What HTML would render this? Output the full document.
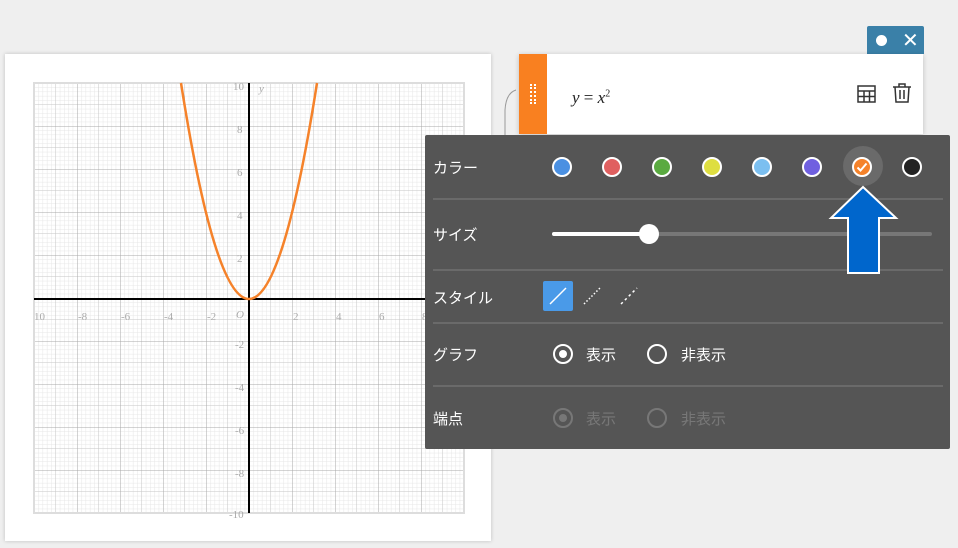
<!DOCTYPE html>
<html><head><meta charset="utf-8"><style>
body{margin:0;width:958px;height:548px;background:#efefef;position:relative;overflow:hidden;font-family:"Liberation Sans","Noto Sans CJK JP",sans-serif}
.card{position:absolute;left:5px;top:54px;width:486px;height:487px;background:#fff;box-shadow:0 0 4px rgba(0,0,0,.2)}
.eq{position:absolute;left:519px;top:54px;width:404px;height:80px;background:#fff;box-shadow:0 1px 5px rgba(0,0,0,.2)}
.strip{position:absolute;left:0;top:0;width:28px;height:80px;background:#f98020}
.btn{position:absolute;left:867px;top:26px;width:57px;height:28px;background:#3a80a8;border-radius:2px 2px 0 0}
.panel{position:absolute;left:425px;top:135px;width:525px;height:314px;background:#555;border-radius:2px;color:#fff;font-size:15px}
.lbl{position:absolute;left:8px}
.hr{position:absolute;left:8px;width:510px;height:2px;background:#6a6a6a}
.dot{position:absolute;width:16px;height:16px;border:2px solid #fff;border-radius:50%;top:157px}
.rad{position:absolute;width:16px;height:16px;border:2px solid #fff;border-radius:50%}
</style></head><body>
<svg style="position:absolute;left:498px;top:85px" width="20" height="60"><path d="M18 5Q8 8 7 25V60" fill="none" stroke="#999" stroke-width="1"/></svg>
<div class="card">
<svg width="486" height="487" style="position:absolute;left:0;top:0">
<defs>
<pattern id="mn" x="29" y="29" width="4.3" height="4.3" patternUnits="userSpaceOnUse"><path d="M0 0H4.3M0 0V4.3" stroke="#e6e6e6" stroke-width="1" fill="none"/></pattern>
<pattern id="md" x="29" y="29" width="21.5" height="21.5" patternUnits="userSpaceOnUse"><path d="M0 0H21.5M0 0V21.5" stroke="#c6c6c6" stroke-width="1" fill="none"/></pattern>
<pattern id="mj" x="29" y="29" width="43" height="43" patternUnits="userSpaceOnUse"><path d="M0 0H43M0 0V43" stroke="#a8a8a8" stroke-width="1" fill="none"/></pattern>
</defs>
<rect x="29" y="29" width="430" height="430" fill="url(#mn)"/>
<rect x="29" y="29" width="430" height="430" fill="url(#md)"/>
<rect x="29" y="29" width="430" height="430" fill="url(#mj)"/>
<rect x="29" y="29" width="430" height="430" fill="none" stroke="#ddd" stroke-width="2"/>
<line x1="29" y1="245" x2="459" y2="245" stroke="#000" stroke-width="2"/>
<line x1="244" y1="29" x2="244" y2="459" stroke="#000" stroke-width="2"/>
<path d="M176 29 Q244 461 312 29" fill="none" stroke="#f5822a" stroke-width="2.5"/>
<g font-family="Liberation Serif" font-size="11" fill="#aaa">
<text x="29" y="266">10</text><text x="73" y="266">-8</text><text x="116" y="266">-6</text><text x="159" y="266">-4</text><text x="202" y="266">-2</text><text x="231" y="264" font-style="italic">O</text><text x="288" y="266">2</text><text x="331" y="266">4</text><text x="374" y="266">6</text><text x="417" y="266">8</text>
<text x="228" y="36">10</text><text x="232" y="79">8</text><text x="232" y="122">6</text><text x="232" y="165">4</text><text x="232" y="208">2</text><text x="230" y="294">-2</text><text x="230" y="337">-4</text><text x="230" y="380">-6</text><text x="230" y="423">-8</text><text x="224" y="464">-10</text><text x="254" y="38" font-style="italic">y</text>
</g></svg></div>
<div class="btn"><div style="position:absolute;left:9px;top:9px;width:11px;height:11px;border-radius:50%;background:#fff"></div><div style="position:absolute;left:35px;top:2px;color:#fff;font-size:20px">✕</div></div>
<div class="eq"><div class="strip"><div style="position:absolute;left:11px;top:30px;width:6px;height:20px;border-left:2px dotted #fff;border-right:2px dotted #fff;box-sizing:border-box"></div></div>
<div style="position:absolute;left:53px;top:34px;font-family:'Liberation Serif';font-size:17px;font-style:italic;color:#222">y <span style="font-style:normal">=</span> x<sup style="font-size:10px;font-style:normal">2</sup></div>
<svg style="position:absolute;left:338px;top:30px" width="20" height="20"><rect x="1" y="2" width="17" height="16" fill="none" stroke="#333" stroke-width="1.5"/><path d="M1 7H18M1 12.5H18M7 7V18M12.5 7V18" stroke="#333" stroke-width="1.5"/></svg>
<svg style="position:absolute;left:373px;top:28px" width="20" height="22"><path d="M1 5H19M7 5V2H13V5M3 5L4 20H16L17 5M8 8V17M12 8V17" fill="none" stroke="#333" stroke-width="1.5"/></svg>
</div>
<div class="panel">
<div class="lbl" style="top:22px">カラー</div>
<div class="lbl" style="top:89px">サイズ</div>
<div class="lbl" style="top:152px">スタイル</div>
<div class="lbl" style="top:209px">グラフ</div>
<div class="lbl" style="top:273px">端点</div>
<div class="hr" style="top:63px"></div><div class="hr" style="top:134px"></div><div class="hr" style="top:187px"></div><div class="hr" style="top:250px"></div>
<div style="position:absolute;left:127px;top:97px;width:380px;height:4px;background:#777;border-radius:2px"></div>
<div style="position:absolute;left:127px;top:97px;width:97px;height:4px;background:#fff;border-radius:2px"></div>
<div style="position:absolute;left:214px;top:89px;width:20px;height:20px;background:#fff;border-radius:50%"></div>
<div style="position:absolute;left:118px;top:146px;width:30px;height:30px;background:#4a9ae8;border-radius:2px"></div>
<svg style="position:absolute;left:118px;top:146px" width="100" height="30"><path d="M7 23L23 7" stroke="#fff" stroke-width="1.5"/><path d="M41 23L57 7" stroke="#fff" stroke-width="1.5" stroke-dasharray="1.5 2"/><path d="M78 23L94 7" stroke="#fff" stroke-width="1.5" stroke-dasharray="2.5 3"/></svg>
<div class="rad" style="left:128px;top:209px"></div><div style="position:absolute;left:134px;top:215px;width:8px;height:8px;border-radius:50%;background:#fff"></div>
<div style="position:absolute;left:161px;top:209px">表示</div>
<div class="rad" style="left:222px;top:209px"></div><div style="position:absolute;left:256px;top:209px">非表示</div>
<div style="opacity:.2"><div class="rad" style="left:128px;top:273px"></div><div style="position:absolute;left:134px;top:279px;width:8px;height:8px;border-radius:50%;background:#fff"></div><div style="position:absolute;left:161px;top:273px">表示</div><div class="rad" style="left:222px;top:273px"></div><div style="position:absolute;left:256px;top:273px">非表示</div></div>
</div>
<div class="dot" style="left:552px;background:#4a90e2"></div>
<div class="dot" style="left:602px;background:#e06060"></div>
<div class="dot" style="left:652px;background:#5aaa40"></div>
<div class="dot" style="left:702px;background:#dede40"></div>
<div class="dot" style="left:752px;background:#7bbff0"></div>
<div class="dot" style="left:802px;background:#7060e0"></div>
<div style="position:absolute;left:843px;top:146px;width:40px;height:40px;border-radius:50%;background:#6a6a6a"></div>
<div class="dot" style="left:852px;background:#f5822a"></div>
<svg style="position:absolute;left:854px;top:159px" width="16" height="16"><path d="M3.5 8.5L6.5 11.5L12.5 4.5" fill="none" stroke="#fff" stroke-width="2"/></svg>
<div class="dot" style="left:902px;background:#222"></div>
<svg style="position:absolute;left:828px;top:184px" width="72" height="92"><path d="M35 3L68 34H51V89H20V34H3Z" fill="#0066cc" stroke="#fff" stroke-width="2"/></svg>
</body></html>
